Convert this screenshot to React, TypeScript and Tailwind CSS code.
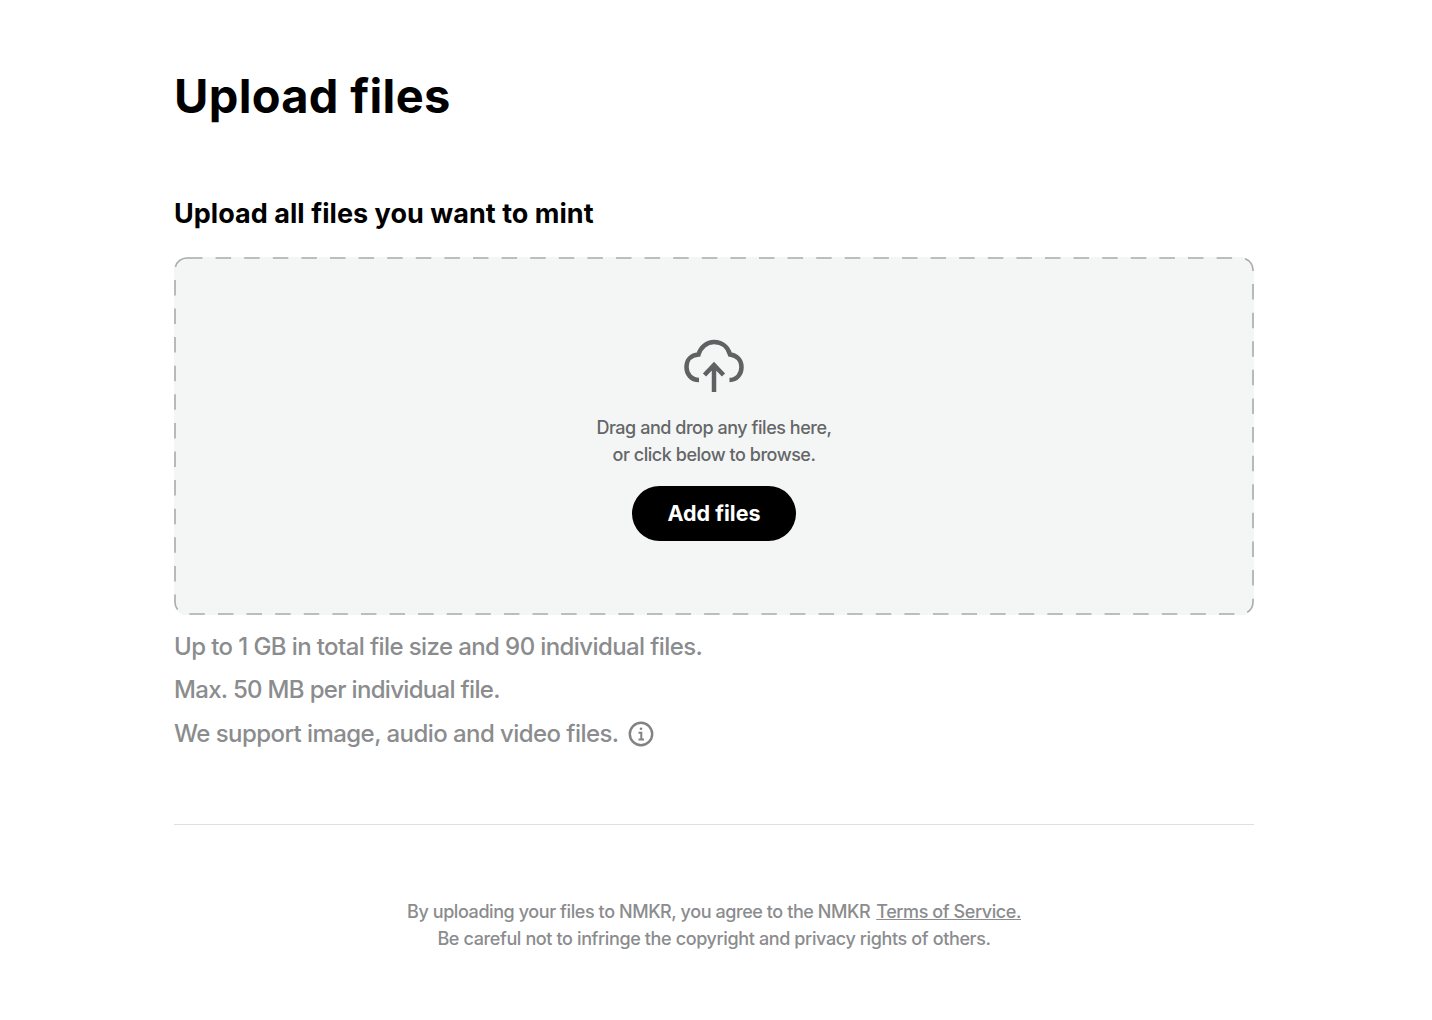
export default function App() {
  return (
    <div className="min-h-[1020px] bg-white font-['Inter','Liberation_Sans',sans-serif]">
      <main className="ml-[174px] w-[1080px] pt-[66px]">
        <h1 className="text-[47px] leading-[60px] font-bold tracking-[0.3px] text-black">Upload files</h1>
        <h2 className="mt-[71px] text-[27px] leading-[34px] font-bold tracking-[0.04px] text-black">Upload all files you want to mint</h2>
        <section className="relative mt-[26px] flex h-[358px] flex-col items-center rounded-xl bg-[#f4f6f5] pt-[82px]">
          <svg className="absolute inset-0" width="1080" height="358" fill="none">
            <rect x="1" y="1" width="1078" height="356" rx="12" stroke="#a9abac" strokeWidth="1.6" strokeDasharray="15.500 13.100" />
          </svg>
          <svg width="60" height="54" viewBox="684 339 60 54" fill="none" stroke="#5f6163" strokeWidth="4.500">
            <path d="M699 380C691 380 686.500 374 686.500 367C686.500 360 691 355 698.500 354.500C700.500 347 707 342 714 342C722 342 728 347 730 354.500C737 355.500 741.500 360 741.500 367C741.500 374 737 380 729.500 380" />
            <path d="M714 392V365M704.500 375L714 365L723.500 375" />
          </svg>
          <p className="mt-[21px] text-center text-[18px] leading-[27px] font-[450] tracking-[-0.46px] text-[#646668]">
            Drag and drop any files here,
            <br />
            or click below to browse.
          </p>
          <button className="mt-[18px] h-[55px] w-[164px] rounded-full bg-black text-[21.500px] font-bold text-white">Add files</button>
        </section>
        <div className="mt-[10px] text-[24px] font-[450] text-[#8a8c8e]">
          <p className="leading-[44px] tracking-[-0.6px]">Up to 1 GB in total file size and 90 individual files.</p>
          <p className="mb-[1px] leading-[42px] tracking-[-0.68px]">Max. 50 MB per individual file.</p>
          <p className="flex items-center gap-[9px] leading-[44px] tracking-[-0.56px]">
            We support image, audio and video files.
            <svg width="26" height="26" viewBox="0 0 26 26" fill="none" stroke="#808284">
              <circle cx="13" cy="13" r="11.200" strokeWidth="2.400" />
              <path d="M10.500 11.800H13.300V18.500M10.500 18.500H16" strokeWidth="2" />
              <circle cx="13" cy="7.800" r="1.300" fill="#808284" stroke="none" />
            </svg>
          </p>
        </div>
        <hr className="mt-[68px] border-[#dedfe0]" />
        <footer className="mt-[73px] text-center text-[18px] leading-[27px] font-[450] text-[#8a8c8e]">
          <p className="tracking-[-0.42px]">
            By uploading your files to NMKR, you agree to the NMKR
            <a className="ml-[6px] underline">Terms of Service.</a>
          </p>
          <p className="tracking-[-0.38px]">Be careful not to infringe the copyright and privacy rights of others.</p>
        </footer>
      </main>
    </div>
  );
}
